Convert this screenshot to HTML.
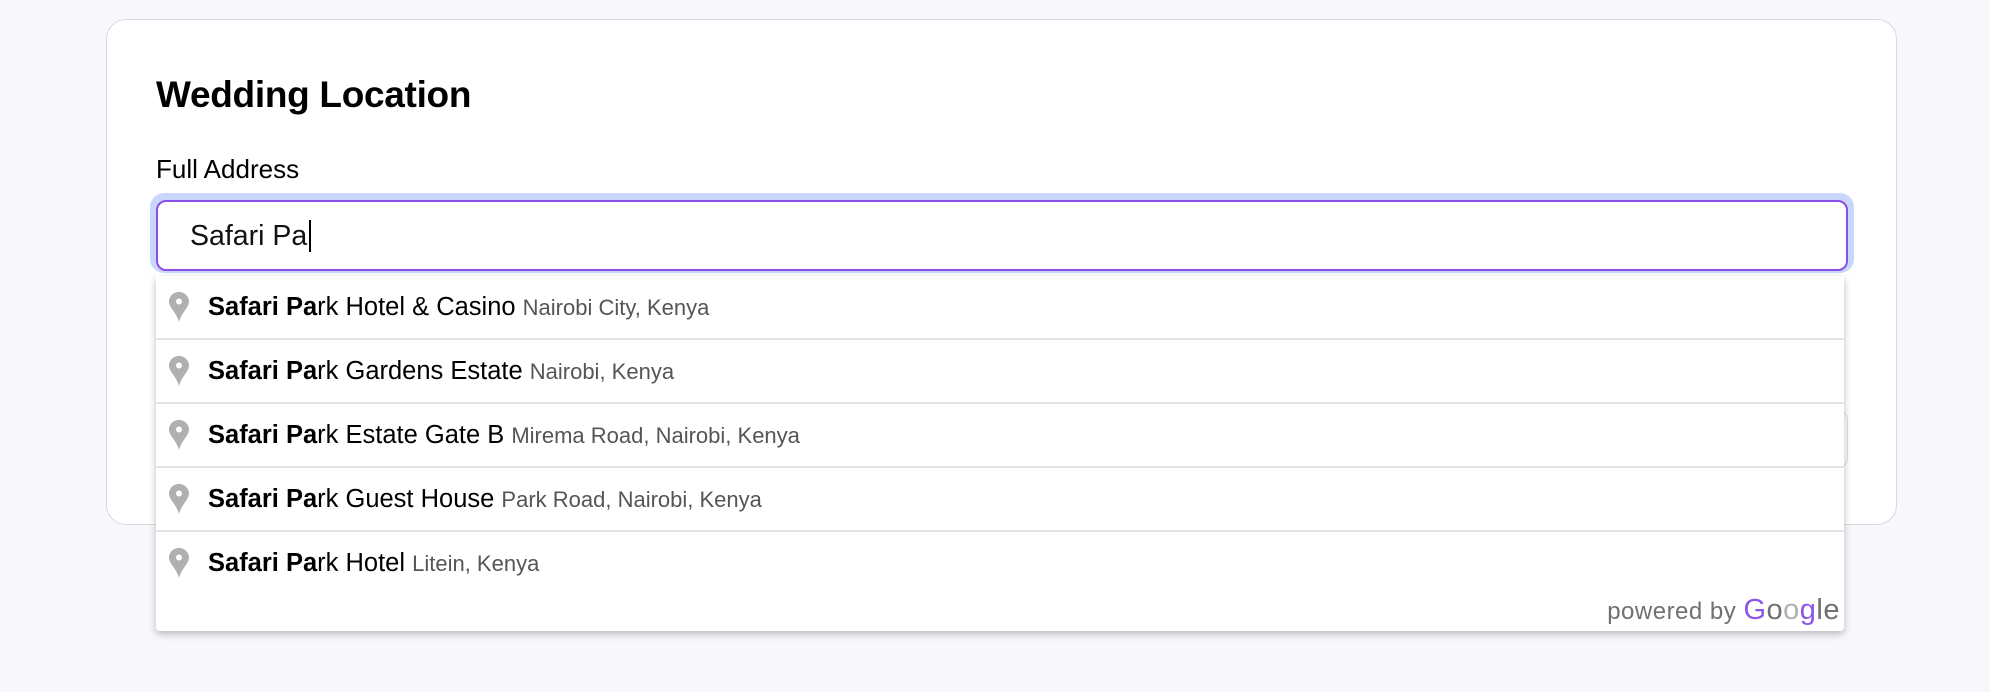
<!DOCTYPE html>
<html><head><meta charset="utf-8"><style>
*{box-sizing:border-box;margin:0;padding:0}
body{width:1990px;height:692px;background:#f7f7fc;font-family:"Liberation Sans",sans-serif;position:relative;overflow:hidden}
.card{position:absolute;left:106px;top:19px;width:1791px;height:506px;background:#fff;border:1.5px solid #d9d9de;border-radius:20px}
h1{position:absolute;left:156px;top:74px;font-size:37px;font-weight:700;color:#000;letter-spacing:-0.3px}
.lbl{position:absolute;left:156px;top:154px;font-size:26px;color:#000}
.ring{position:absolute;left:150px;top:193px;width:1704px;height:80px;border-radius:14px;background:#c9d8fa}
.inp{position:absolute;left:156px;top:200px;width:1692px;height:71px;border:2px solid #8b4fe6;border-radius:10px;background:#fff}
.inp span{position:absolute;left:32px;top:18px;font-size:28.5px;color:#111}
.caret{position:absolute;left:309px;top:220px;width:2px;height:32px;background:#000}
.behind{position:absolute;left:1800px;top:410px;width:48px;height:58px;border:1.5px solid #ddd;border-left:none;border-radius:0 10px 10px 0}
.dd{position:absolute;left:156px;top:276px;width:1688px;height:355px;background:#fff;box-shadow:0 3px 8px rgba(0,0,0,.25);border-radius:0 0 4px 4px}
.row{height:64px;border-bottom:2px solid #e3e3e3;position:relative;font-size:25.5px;color:#000}
.row:nth-child(5){border-bottom:none}
.row svg{position:absolute;left:13px;top:16px}
.row .t{position:absolute;left:52px;top:17px;white-space:nowrap}
.row .s{font-size:22px;color:#555}
.pw{position:absolute;right:4px;bottom:4px;font-size:24px;color:#707070;font-family:"Liberation Sans",sans-serif;letter-spacing:0.5px}
</style></head><body>
<div class="card"></div>
<h1>Wedding Location</h1>
<div class="lbl">Full Address</div>
<div class="behind"></div>
<div class="ring"></div>
<div class="inp"><span>Safari Pa</span></div>
<div class="caret"></div>
<div class="dd">
 <div class="row"><svg width="20" height="30" viewBox="0 0 20 30"><path d="M10 0C4.5 0 0 4.3 0 9.6c0 6 7 10 10 20.4C13 19.6 20 15.6 20 9.6 20 4.3 15.5 0 10 0z" fill="#b0b0b0"/><circle cx="10" cy="9.5" r="3" fill="#fff"/></svg><div class="t"><b>Safari Pa</b>rk Hotel &amp; Casino <span class="s">Nairobi City, Kenya</span></div></div>
 <div class="row"><svg width="20" height="30" viewBox="0 0 20 30"><path d="M10 0C4.5 0 0 4.3 0 9.6c0 6 7 10 10 20.4C13 19.6 20 15.6 20 9.6 20 4.3 15.5 0 10 0z" fill="#b0b0b0"/><circle cx="10" cy="9.5" r="3" fill="#fff"/></svg><div class="t"><b>Safari Pa</b>rk Gardens Estate <span class="s">Nairobi, Kenya</span></div></div>
 <div class="row"><svg width="20" height="30" viewBox="0 0 20 30"><path d="M10 0C4.5 0 0 4.3 0 9.6c0 6 7 10 10 20.4C13 19.6 20 15.6 20 9.6 20 4.3 15.5 0 10 0z" fill="#b0b0b0"/><circle cx="10" cy="9.5" r="3" fill="#fff"/></svg><div class="t"><b>Safari Pa</b>rk Estate Gate B <span class="s">Mirema Road, Nairobi, Kenya</span></div></div>
 <div class="row"><svg width="20" height="30" viewBox="0 0 20 30"><path d="M10 0C4.5 0 0 4.3 0 9.6c0 6 7 10 10 20.4C13 19.6 20 15.6 20 9.6 20 4.3 15.5 0 10 0z" fill="#b0b0b0"/><circle cx="10" cy="9.5" r="3" fill="#fff"/></svg><div class="t"><b>Safari Pa</b>rk Guest House <span class="s">Park Road, Nairobi, Kenya</span></div></div>
 <div class="row"><svg width="20" height="30" viewBox="0 0 20 30"><path d="M10 0C4.5 0 0 4.3 0 9.6c0 6 7 10 10 20.4C13 19.6 20 15.6 20 9.6 20 4.3 15.5 0 10 0z" fill="#b0b0b0"/><circle cx="10" cy="9.5" r="3" fill="#fff"/></svg><div class="t"><b>Safari Pa</b>rk Hotel <span class="s">Litein, Kenya</span></div></div>
 <div class="pw">powered by <span style="font-size:29px"><span style="color:#8b55e8">G</span><span style="color:#707070">o</span><span style="color:#b0b0b0">o</span><span style="color:#8b55e8">g</span><span style="color:#707070">le</span></span></div>
</div>
</body></html>
